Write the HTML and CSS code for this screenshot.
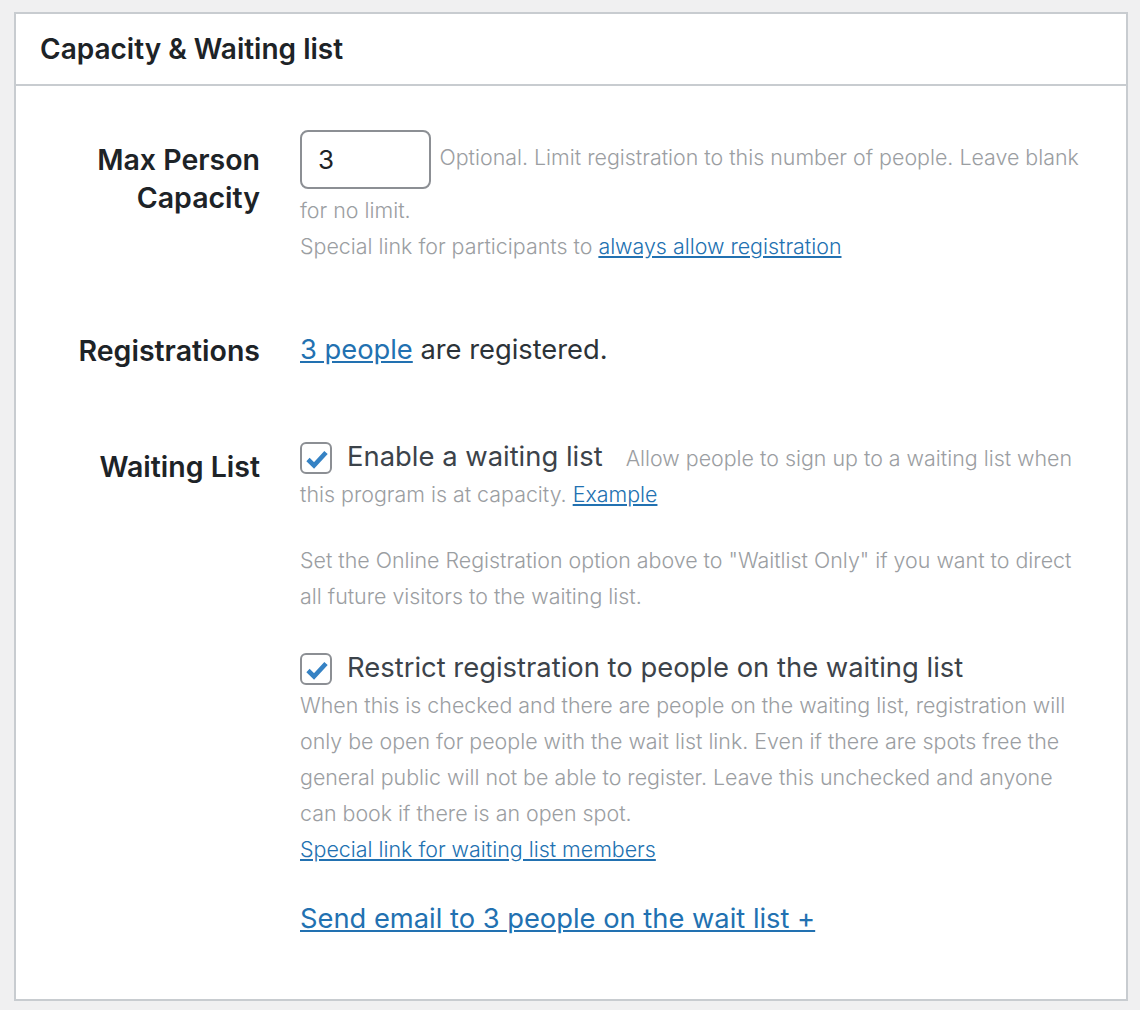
FILE: index.html
```html
<!DOCTYPE html>
<html lang="en">
<head>
    <meta charset="UTF-8">
    <meta name="viewport" content="width=device-width, initial-scale=1.0">
    <title>Capacity &amp; Waiting list</title>
    <link rel="stylesheet" href="styles.css">
</head>
<body>
    <div class="postbox">
        <div class="postbox-header">
            <h2>Capacity &amp; Waiting list</h2>
        </div>

        <div class="inside">
            <div class="field-row row-capacity">
                <div class="field-label">Max Person<br>Capacity</div>
                <div class="field-value">
                    <input type="text" class="small-input" value="3">
                    <span class="description">Optional. Limit registration to this number of people. Leave blank for no limit.</span>
                    <div class="description">Special link for participants to <a href="#">always allow registration</a></div>
                </div>
            </div>

            <div class="field-row row-registrations">
                <div class="field-label">Registrations</div>
                <div class="field-value main-text"><a href="#">3 people</a> are registered.</div>
            </div>

            <div class="field-row row-waiting">
                <div class="field-label">Waiting List</div>
                <div class="field-value">
                    <div class="check-line">
                        <span class="checkbox">
                            <svg width="28" height="28" viewBox="0 0 28 28"><path d="M5 14.5 L11 20.5 L23 7.5" fill="none" stroke="#3582c4" stroke-width="4.6" stroke-linejoin="miter"/></svg>
                        </span>
                        <span class="check-label">Enable a waiting list</span>
                        <span class="description spaced">Allow people to sign up to a waiting list when this program is at capacity. <a href="#">Example</a></span>
                    </div>

                    <p class="description note">Set the Online Registration option above to "Waitlist Only" if you want to direct all future visitors to the waiting list.</p>

                    <div class="check-line restrict">
                        <span class="checkbox">
                            <svg width="28" height="28" viewBox="0 0 28 28"><path d="M5 14.5 L11 20.5 L23 7.5" fill="none" stroke="#3582c4" stroke-width="4.6" stroke-linejoin="miter"/></svg>
                        </span>
                        <span class="check-label">Restrict registration to people on the waiting list</span>
                    </div>
                    <div class="description">When this is checked and there are people on the waiting list, registration will only be open for people with the wait list link. Even if there are spots free the general public will not be able to register. Leave this unchecked and anyone can book if there is an open spot.</div>
                    <div class="description"><a href="#">Special link for waiting list members</a></div>

                    <div class="main-text send-email"><a href="#">Send email to 3 people on the wait list +</a></div>
                </div>
            </div>
        </div>
    </div>
</body>
</html>
```

FILE: styles.css
```css
body {
    margin: 12px 12px 10px 14px;
    background-color: #f0f0f1;
    font-family: Inter, "Noto Sans", sans-serif;
    color: #1d2327;
}
a {
    color: #2271b1;
}
.postbox {
    background-color: #fff;
    border: 2px solid #c8ccd0;
}
.postbox-header {
    height: 70px;
    border-bottom: 2px solid #c8ccd0;
    display: flex;
    align-items: center;
    padding: 0 24px;
}
.postbox-header h2 {
    margin: 0;
    font-size: 28px;
    font-weight: 600;
    color: #1d2327;
}
.inside {
    padding: 44px 40px 62px 0;
}
.field-row {
    display: grid;
    grid-template-columns: 244px 1fr;
    column-gap: 40px;
    align-items: start;
}
.field-label {
    text-align: right;
    font-size: 28.5px;
    font-weight: 600;
    line-height: 38px;
}
.row-capacity .field-label {
    padding-top: 11px;
}
.row-registrations {
    margin-top: 68px;
}
.row-waiting {
    margin-top: 70px;
}
.row-waiting .field-label {
    padding-top: 8px;
}
.description {
    font-size: 21.4px;
    line-height: 36px;
    font-weight: 300;
    color: #9b9ea2;
}
.small-input {
    width: 131px;
    height: 59px;
    box-sizing: border-box;
    border: 2px solid #8c8f94;
    border-radius: 8px;
    padding: 0 16px;
    font-family: inherit;
    font-size: 26px;
    color: #1d2327;
    vertical-align: middle;
    margin: 0 4px 3px 0;
}
.main-text {
    font-size: 27.3px;
    line-height: 36px;
    color: #2c3338;
}
.check-line {
    font-size: 21.4px;
    line-height: 36px;
}
.checkbox {
    display: inline-block;
    width: 32px;
    height: 32px;
    box-sizing: border-box;
    border: 2px solid #8c8f94;
    border-radius: 6px;
    vertical-align: -8px;
    margin-right: 9px;
}
.checkbox svg {
    display: block;
    margin: 1px;
}
.check-label {
    font-size: 27.4px;
    line-height: 1;
    color: #3c434a;
}
.spaced {
    margin-left: 17px;
}
.note {
    margin: 30px 0 37px;
}
.send-email {
    margin-top: 34px;
}
```
